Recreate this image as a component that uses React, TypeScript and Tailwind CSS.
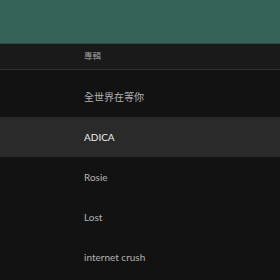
export default function App() {
  const rows = ['全世界在等你', 'ADICA', 'Rosie', 'Lost', 'internet crush'];
  return (
    <div className="w-[280px] h-[280px] overflow-hidden bg-[#121212] font-['Lato','Noto_Sans_CJK_TC',sans-serif]">
      <div className="h-[44px] bg-[#346358] border-b border-[#2b4f47]" />
      <div className="h-[26px] flex items-center pl-[84px] bg-[#1a1a1a] border-b border-[#303030]">
        <span className="text-[8.5px] text-[#9a9a9a]">專輯</span>
      </div>
      <div className="pt-[7px]">
        {rows.map((r, i) => (
          <div
            key={r}
            className={`h-[40px] flex items-center pl-[84px] text-[10px] pt-px ${
              i === 1 ? 'bg-[#2a2a2a] text-[#ececec]' : 'text-[#b3b3b3]'
            }`}
          >
            {r}
          </div>
        ))}
      </div>
    </div>
  );
}
